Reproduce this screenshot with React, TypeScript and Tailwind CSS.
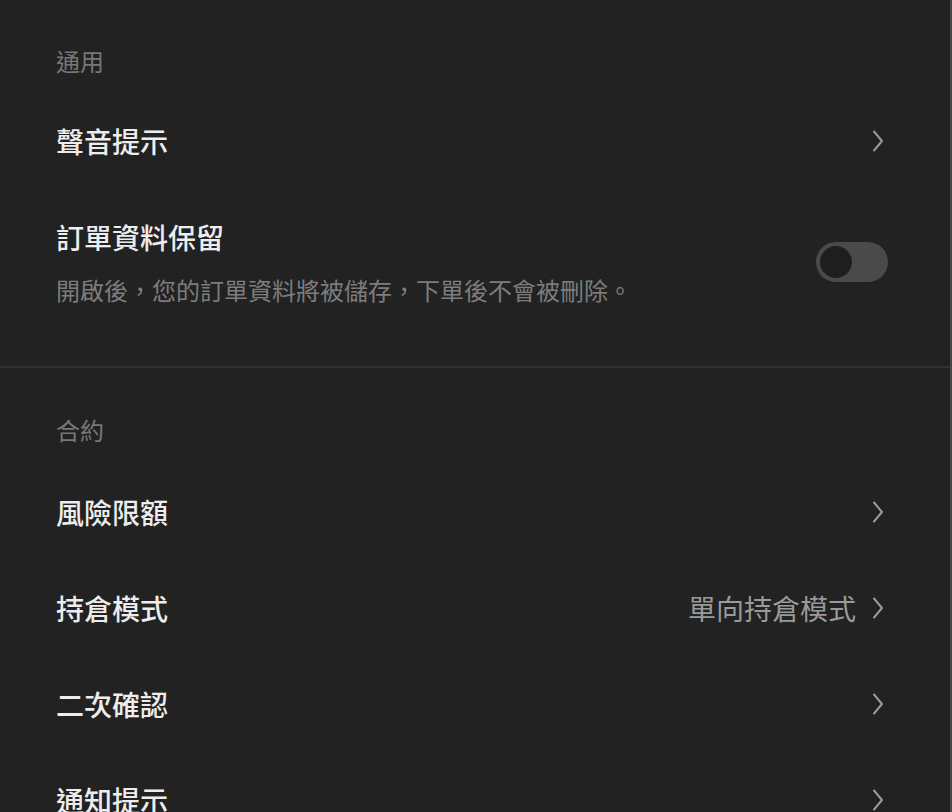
import React, { useState } from 'react';

const FONT = "font-['PingFang_TC','Noto_Sans_CJK_TC','Noto_Sans',sans-serif]";

const Chevron = () => (
  <svg width="12" height="22" viewBox="0 0 12 22" fill="none" className="shrink-0">
    <path d="M2 1.5 L10 11 L2 20.5" stroke="#9a9a9a" strokeWidth="2" strokeLinecap="round" strokeLinejoin="round" />
  </svg>
);

const LinkRow = ({ title, value }: { title: string; value?: string }) => (
  <div className="h-[96px] flex items-center justify-between">
    <span className="text-[28px] leading-[40px] font-medium text-[#ededed]">{title}</span>
    <div className="flex items-center gap-[16px]">
      {value && <span className="text-[28px] leading-[40px] text-[#9a9a9a]">{value}</span>}
      <Chevron />
    </div>
  </div>
);

const App: React.FC = () => {
  const [keepOrder, setKeepOrder] = useState(false);

  return (
    <div className={`w-[952px] h-[812px] overflow-hidden bg-[#222222] border-r-2 border-[#474747] ${FONT}`}>
      {/* 通用 */}
      <div className="pl-[56px] pr-[62px] pt-[45px] pb-[31px]">
        <div className="text-[24px] leading-[32px] text-[#777777] mb-[16px]">通用</div>
        <div className="pr-[4px]">
          <LinkRow title="聲音提示" />
        </div>
        <div className="py-[28px] flex items-center justify-between">
          <div>
            <div className="text-[28px] leading-[40px] font-medium text-[#ededed] mb-[16px]">訂單資料保留</div>
            <div className="text-[24px] leading-[34px] text-[#7d7d7d]">開啟後，您的訂單資料將被儲存，下單後不會被刪除。</div>
          </div>
          <button
            onClick={() => setKeepOrder(!keepOrder)}
            className={`w-[72px] h-[40px] rounded-full p-[4px] flex ${keepOrder ? 'bg-emerald-500 justify-end' : 'bg-[#4a4a4a] justify-start'}`}
          >
            <span className="w-[32px] h-[32px] rounded-full bg-[#1e1e1e]" />
          </button>
        </div>
      </div>

      <div className="h-[2px] bg-[#323232]" />

      {/* 合約 */}
      <div className="pl-[56px] pr-[66px] pt-[46px]">
        <div className="text-[24px] leading-[32px] text-[#777777] mb-[18px]">合約</div>
        <LinkRow title="風險限額" />
        <LinkRow title="持倉模式" value="單向持倉模式" />
        <LinkRow title="二次確認" />
        <LinkRow title="通知提示" />
      </div>
    </div>
  );
};

export default App;
